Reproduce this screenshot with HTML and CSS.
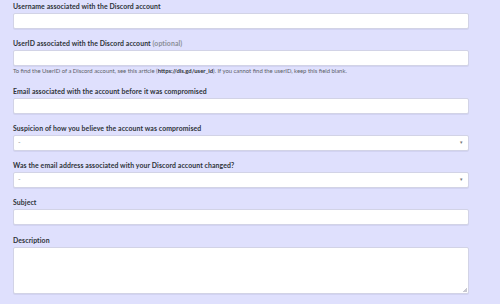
FILE: index.html
```html
<!DOCTYPE html>
<html>
<head>
<meta charset="utf-8">
<link rel="stylesheet" href="styles.css">
</head>
<body>
<form class="form">
  <div class="field">
    <label class="label">Username associated with the Discord account</label>
    <div class="input"></div>
  </div>
  <div class="field field-help">
    <label class="label">UserID associated with the Discord account <span class="opt">(optional)</span></label>
    <div class="input"></div>
    <p class="help">To find the UserID of a Discord account, see this article (<b>https://dis.gd/user_id</b>). If you cannot find the userID, keep this field blank.</p>
  </div>
  <div class="field">
    <label class="label">Email associated with the account before it was compromised</label>
    <div class="input"></div>
  </div>
  <div class="field">
    <label class="label">Suspicion of how you believe the account was compromised</label>
    <div class="input select"><span class="dash">-</span><span class="caret">▾</span></div>
  </div>
  <div class="field">
    <label class="label">Was the email address associated with your Discord account changed?</label>
    <div class="input select"><span class="dash">-</span><span class="caret">▾</span></div>
  </div>
  <div class="field field-subject">
    <label class="label">Subject</label>
    <div class="input"></div>
  </div>
  <div class="field">
    <label class="label">Description</label>
    <div class="input textarea"><span class="grip"></span></div>
  </div>
</form>
</body>
</html>
```
FILE: styles.css
```css
html, body {
  margin: 0;
  padding: 0;
  background: #dfe0fd;
  height: 100%;
}
body {
  font-family: Lato, "Noto Sans", sans-serif;
  overflow: hidden;
}
.form {
  width: 456px;
  padding: 1px 0 0 13px;
  display: flex;
  flex-direction: column;
}
.field {
  display: flex;
  flex-direction: column;
  margin-bottom: 9px;
}
.field-help {
  margin-bottom: 11px;
}
.field-subject {
  margin-bottom: 10px;
}
.label {
  font-size: 6.9px;
  line-height: 10px;
  font-weight: 700;
  color: #2e3338;
  margin-bottom: 2px;
  letter-spacing: 0.1px;
}
.opt {
  color: #8a8e96;
  font-weight: 700;
}
.input {
  height: 16px;
  box-sizing: border-box;
  background: #fff;
  border: 1px solid #d2d3e6;
  border-radius: 2px;
  box-shadow: 0 1px 0 rgba(140,140,180,0.15);
  position: relative;
}
.select {
  display: flex;
  align-items: center;
  justify-content: space-between;
  padding: 0 5px 1px 4px;
}
.dash {
  font-size: 7px;
  color: #9a9da5;
  line-height: 1;
}
.caret {
  font-size: 5px;
  color: #777;
  line-height: 1;
}
.textarea {
  height: 47px;
}
.grip {
  position: absolute;
  right: 1px;
  bottom: 1px;
  width: 4px;
  height: 4px;
  background: linear-gradient(135deg, transparent 50%, #c8c8d0 50%);
}
.help {
  margin: 1px 0 0 0;
  font-size: 5.9px;
  line-height: 8px;
  color: #5a5f68;
}
.help b {
  color: #2e3338;
}
```
